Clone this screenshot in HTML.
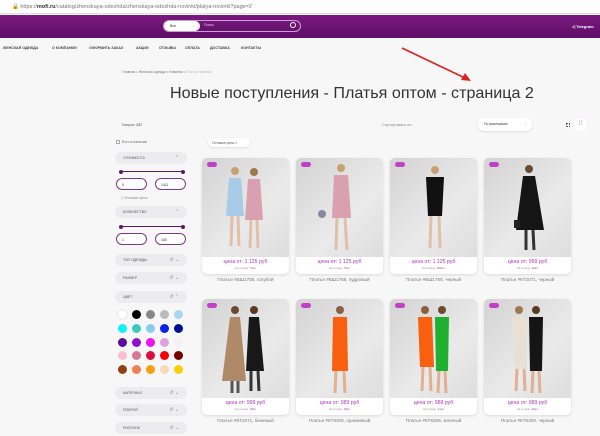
<!DOCTYPE html>
<html><head><meta charset="utf-8"><style>
*{margin:0;padding:0;box-sizing:border-box}
body{width:600px;height:436px;overflow:hidden;background:#f7f7f8;font-family:"Liberation Sans",sans-serif;position:relative;color:#333}
.a{position:absolute}
.url{left:0;top:0;width:600px;height:14px;background:#fff;border-bottom:1px solid #ddd;font-size:5.5px;color:#777;padding:4px 0 0 12px}
.hdr{left:0;top:15px;width:600px;height:23px;background:linear-gradient(#7a1980,#5e0d66)}
.nav{top:46px;font-size:3.6px;font-weight:bold;color:#444;white-space:nowrap}
.pill{left:115px;width:72px;height:12px;background:#ececee;border-radius:6px;font-size:3.5px;color:#555;padding:4px 0 0 8px}
.pill i{position:absolute;right:8px;top:3px;font-style:normal;font-size:5px;color:#888}
.inp{width:31px;height:12px;border:1px solid #7a3a85;border-radius:6px;background:#fff;font-size:3.5px;padding:4px 0 0 5px}
.sl{left:121px;width:62px;height:1px;background:#5a1a6a}
.sl:before,.sl:after{content:"";position:absolute;top:-1.5px;width:4px;height:4px;border-radius:50%;background:#5a1a6a}
.sl:before{left:-2px}.sl:after{right:-2px}
.c{width:9px;height:9px;border-radius:50%}
.card{width:87px;height:116px;background:#fff;border-radius:5px;box-shadow:0 1px 3px rgba(0,0,0,.12);overflow:hidden}
.card .img{position:absolute;left:0;top:0;width:87px;height:99px;background:linear-gradient(135deg,#d4d3d3,#ebeaea 60%,#dedddd)}
.card .new{position:absolute;left:5px;top:4px;width:10px;height:5px;border-radius:3px;background:#c040c8}
.pr{position:absolute;left:0;top:101px;width:87px;text-align:center;font-size:5.2px;color:#b030c0}
.pr2{position:absolute;left:0;top:108px;width:87px;text-align:center;font-size:2.8px;color:#999}
.cap{width:87px;text-align:center;font-size:4.6px;color:#777}
</style></head><body>
<div class="a url">🔒 https://<b style="color:#333">mofi.ru</b>/catalog/zhenskaya-odezhda/zhenskaya-odezhda-novinki/platya-novinki?page=2</div>
<div class="a hdr"></div>
<div class="a" style="left:163px;top:20px;width:138px;height:12px;border:1px solid #c9a0d0;border-radius:6px"></div>
<div class="a" style="left:164px;top:21px;width:36px;height:10px;background:#fff;border-radius:5px;font-size:3.5px;padding:3px 0 0 6px">Все<span style="position:absolute;right:5px;color:#888">⌄</span></div>
<div class="a" style="left:204px;top:23px;font-size:3.5px;color:#ddd">Поиск</div>
<div class="a" style="left:290px;top:22px;width:6px;height:6px;border:1px solid #fff;border-radius:50%"></div>
<div class="a" style="left:572px;top:24px;font-size:4px;color:#fff;font-weight:bold">◁ Telegram</div>
<div class="a nav" style="left:3px">ЖЕНСКАЯ ОДЕЖДА</div>
<div class="a nav" style="left:52px">О КОМПАНИИ</div>
<div class="a nav" style="left:89px">ОФОРМИТЬ ЗАКАЗ</div>
<div class="a nav" style="left:136px">АКЦИИ</div>
<div class="a nav" style="left:159px">ОТЗЫВЫ</div>
<div class="a nav" style="left:185px">ОПЛАТА</div>
<div class="a nav" style="left:210px">ДОСТАВКА</div>
<div class="a nav" style="left:241px">КОНТАКТЫ</div>
<div class="a" style="left:122px;top:70px;font-size:3.5px;color:#777">Главная • Женская одежда • Новинки • <span style="color:#bbb">Платья новинки</span></div>
<svg class="a" style="left:395px;top:45px" width="85" height="40"><line x1="7" y1="3" x2="72" y2="34" stroke="#e02020" stroke-width="1.6"/><path d="M76 36 L66 35 L70 28 Z" fill="#e02020"/></svg>
<div class="a" style="left:170px;top:84px;font-size:16.1px;color:#333;white-space:nowrap">Новые поступления - Платья оптом - страница 2</div>
<div class="a" style="left:121px;top:123px;font-size:3.5px;color:#666">Товаров: <b>227</b></div>
<div class="a" style="left:382px;top:122px;font-size:4px;color:#888">Сортировать по:</div>
<div class="a" style="left:478px;top:118px;width:54px;height:13px;background:#fff;border-radius:6px;box-shadow:0 1px 2px rgba(0,0,0,.1);font-size:3.5px;padding:4px 0 0 6px">По умолчанию<span style="position:absolute;right:5px;color:#888">⌄</span></div>
<div class="a" style="left:566px;top:123px;width:4px;height:4px;border:1px dotted #555"></div>
<div class="a" style="left:575px;top:119px;width:11px;height:11px;background:#fff;border-radius:2px;color:#c060c8;font-size:6px;text-align:center;line-height:11px">⁞⁞</div>
<div class="a" style="left:116px;top:140px;width:4px;height:4px;border:1px solid #aaa"></div>
<div class="a" style="left:122px;top:140px;font-size:3.5px;color:#666">Есть в наличии</div>
<div class="a pill" style="top:152px">СТОИМОСТЬ<i>⌃</i></div>
<div class="a sl" style="top:171px"></div>
<div class="a inp" style="left:116px;top:178px">0</div>
<div class="a inp" style="left:155px;top:178px">1411</div>
<div class="a" style="left:121px;top:196px;font-size:3.5px;color:#888">▯ Оптовые цены</div>
<div class="a pill" style="top:206px">КОЛИЧЕСТВО<i>⌃</i></div>
<div class="a sl" style="top:226px"></div>
<div class="a inp" style="left:116px;top:233px">1</div>
<div class="a inp" style="left:155px;top:233px">160</div>
<div class="a pill" style="top:254px">ТИП ОДЕЖДЫ<i>↺ ⌄</i></div>
<div class="a pill" style="top:272px">РАЗМЕР<i>↺ ⌄</i></div>
<div class="a pill" style="top:291px">ЦВЕТ<i>↺ ⌃</i></div>
<div class="a c" style="left:118px;top:310px;background:#fff;box-shadow:0 0 1px #aaa"></div>
<div class="a c" style="left:132px;top:310px;background:#000"></div>
<div class="a c" style="left:146px;top:310px;background:#888"></div>
<div class="a c" style="left:160px;top:310px;background:#bbb"></div>
<div class="a c" style="left:174px;top:310px;background:#a8d8f0"></div>
<div class="a c" style="left:118px;top:324px;background:#10f0f8"></div>
<div class="a c" style="left:132px;top:324px;background:#40c8c0"></div>
<div class="a c" style="left:146px;top:324px;background:#88ccf0"></div>
<div class="a c" style="left:160px;top:324px;background:#0820f0"></div>
<div class="a c" style="left:174px;top:324px;background:#001090"></div>
<div class="a c" style="left:118px;top:338px;background:#58109a"></div>
<div class="a c" style="left:132px;top:338px;background:#9010d0"></div>
<div class="a c" style="left:146px;top:338px;background:#f010f0"></div>
<div class="a c" style="left:160px;top:338px;background:#e0a0e0"></div>
<div class="a c" style="left:174px;top:338px;background:#f4f0f4"></div>
<div class="a c" style="left:118px;top:351px;background:#f8c0d0"></div>
<div class="a c" style="left:132px;top:351px;background:#d87898"></div>
<div class="a c" style="left:146px;top:351px;background:#d81040"></div>
<div class="a c" style="left:160px;top:351px;background:#f80000"></div>
<div class="a c" style="left:174px;top:351px;background:#780000"></div>
<div class="a c" style="left:118px;top:365px;background:#904018"></div>
<div class="a c" style="left:132px;top:365px;background:#f08050"></div>
<div class="a c" style="left:146px;top:365px;background:#f8a010"></div>
<div class="a c" style="left:160px;top:365px;background:#f8d8b8"></div>
<div class="a c" style="left:174px;top:365px;background:#f8d000"></div>
<div class="a pill" style="top:387px">МАТЕРИАЛ<i>↺ ⌄</i></div>
<div class="a pill" style="top:404px">ПОКРОЙ<i>↺ ⌄</i></div>
<div class="a pill" style="top:422px">РИСУНОК<i>↺ ⌄</i></div>
<div class="a" style="left:208px;top:138px;width:42px;height:9px;background:#fff;border-radius:5px;box-shadow:0 1px 2px rgba(0,0,0,.1);font-size:3.3px;padding:2.5px 0 0 4px;color:#555">Оптовые цены ×</div>

<div class="a card" style="left:202px;top:158px"><div class="img"><svg width="87" height="99">
<circle cx="33" cy="13" r="4" fill="#c9a070"/><path d="M27 20 L39 20 L42 58 L24 58Z" fill="#a8cce8"/><path d="M30 58 L29 88 M36 58 L37 88" stroke="#e0c0a8" stroke-width="3"/>
<circle cx="52" cy="14" r="4" fill="#a07850"/><path d="M46 21 L58 21 L61 62 L43 62Z" fill="#d8a0b0"/><path d="M49 62 L48 90 M55 62 L56 90" stroke="#e0c0a8" stroke-width="3"/></svg></div><div class="new"></div><div class="pr">цена от: 1 125 руб</div><div class="pr2">На складе: <span style="color:#b030c0">72шт</span></div></div>
<div class="a card" style="left:296px;top:158px"><div class="img"><svg width="87" height="99">
<circle cx="45" cy="10" r="4" fill="#c9a070"/><path d="M38 17 L52 17 L55 60 L36 60Z" fill="#d8a0b0"/><path d="M41 60 L40 92 M49 60 L51 92" stroke="#e0c0a8" stroke-width="3"/><circle cx="26" cy="56" r="4" fill="#8888a0"/></svg></div><div class="new"></div><div class="pr">цена от: 1 125 руб</div><div class="pr2">На складе: <span style="color:#b030c0">72шт</span></div></div>
<div class="a card" style="left:390px;top:158px"><div class="img"><svg width="87" height="99">
<circle cx="45" cy="12" r="4" fill="#c9a070"/><path d="M36 19 L54 19 L52 58 L38 58Z" fill="#111"/><path d="M41 58 L40 90 M49 58 L50 90" stroke="#e0c0a8" stroke-width="3"/></svg></div><div class="new"></div><div class="pr">цена от: 1 125 руб</div><div class="pr2">На складе: <span style="color:#b030c0">180шт</span></div></div>
<div class="a card" style="left:484px;top:158px"><div class="img"><svg width="87" height="99">
<circle cx="45" cy="11" r="4" fill="#6a4a30"/><path d="M39 18 L51 18 L60 72 L32 72Z" fill="#151515"/><path d="M42 72 L42 92 M49 72 L50 92" stroke="#333" stroke-width="3"/><rect x="30" y="62" width="6" height="8" fill="#222"/></svg></div><div class="new"></div><div class="pr">цена от: 999 руб</div><div class="pr2">На складе: <span style="color:#b030c0">24шт</span></div></div>
<div class="a cap" style="left:202px;top:277px">Платье #БШ1758, голубой</div>
<div class="a cap" style="left:296px;top:277px">Платье #БШ1758, пудровый</div>
<div class="a cap" style="left:390px;top:277px">Платье #БШ1758, черный</div>
<div class="a cap" style="left:484px;top:277px">Платье #КТ2071, черный</div>

<div class="a card" style="left:202px;top:299px"><div class="img"><svg width="87" height="99">
<circle cx="33" cy="11" r="4" fill="#6a4a30"/><path d="M28 18 L38 18 L44 82 L20 82Z" fill="#b08a68"/><path d="M30 82 L30 94 M36 82 L36 94" stroke="#555" stroke-width="3"/>
<circle cx="52" cy="11" r="4" fill="#5a3a20"/><path d="M47 18 L57 18 L62 72 L44 72Z" fill="#181818"/><path d="M49 72 L49 92 M56 72 L57 92" stroke="#333" stroke-width="3"/></svg></div><div class="new"></div><div class="pr">цена от: 999 руб</div><div class="pr2">На складе: <span style="color:#b030c0">18шт</span></div></div>
<div class="a card" style="left:296px;top:299px"><div class="img"><svg width="87" height="99">
<circle cx="44" cy="11" r="4" fill="#8a6040"/><path d="M37 18 L51 18 L52 72 L36 72Z" fill="#f86010"/><path d="M40 72 L39 94 M48 72 L49 94" stroke="#e0b090" stroke-width="3"/></svg></div><div class="new"></div><div class="pr">цена от: 989 руб</div><div class="pr2">На складе: <span style="color:#b030c0">18шт</span></div></div>
<div class="a card" style="left:390px;top:299px"><div class="img"><svg width="87" height="99">
<circle cx="35" cy="11" r="4" fill="#8a6040"/><path d="M28 18 L42 18 L44 68 L30 68Z" fill="#f86010"/><path d="M33 68 L32 92 M40 68 L41 92" stroke="#e0b090" stroke-width="3"/>
<circle cx="52" cy="11" r="4" fill="#6a4a30"/><path d="M45 18 L59 18 L58 72 L46 72Z" fill="#20b030"/><path d="M49 72 L48 94 M55 72 L56 94" stroke="#e0b090" stroke-width="3"/></svg></div><div class="new"></div><div class="pr">цена от: 989 руб</div><div class="pr2">На складе: <span style="color:#b030c0">21шт</span></div></div>
<div class="a card" style="left:484px;top:299px"><div class="img"><svg width="87" height="99">
<circle cx="35" cy="11" r="4" fill="#a07850"/><path d="M28 18 L42 18 L43 70 L31 70Z" fill="#e8e0d4"/><path d="M33 70 L32 92 M40 70 L41 92" stroke="#e0b090" stroke-width="3"/>
<circle cx="52" cy="11" r="4" fill="#5a3a20"/><path d="M45 18 L59 18 L58 72 L46 72Z" fill="#151515"/><path d="M49 72 L48 94 M55 72 L56 94" stroke="#e0b090" stroke-width="3"/></svg></div><div class="new"></div><div class="pr">цена от: 989 руб</div><div class="pr2">На складе: <span style="color:#b030c0">20шт</span></div></div>
<div class="a cap" style="left:202px;top:418px">Платье #КТ2071, бежевый</div>
<div class="a cap" style="left:296px;top:418px">Платье #КТ6309, оранжевый</div>
<div class="a cap" style="left:390px;top:418px">Платье #КТ6309, зеленый</div>
<div class="a cap" style="left:484px;top:418px">Платье #КТ6309, черный</div>
</body></html>
